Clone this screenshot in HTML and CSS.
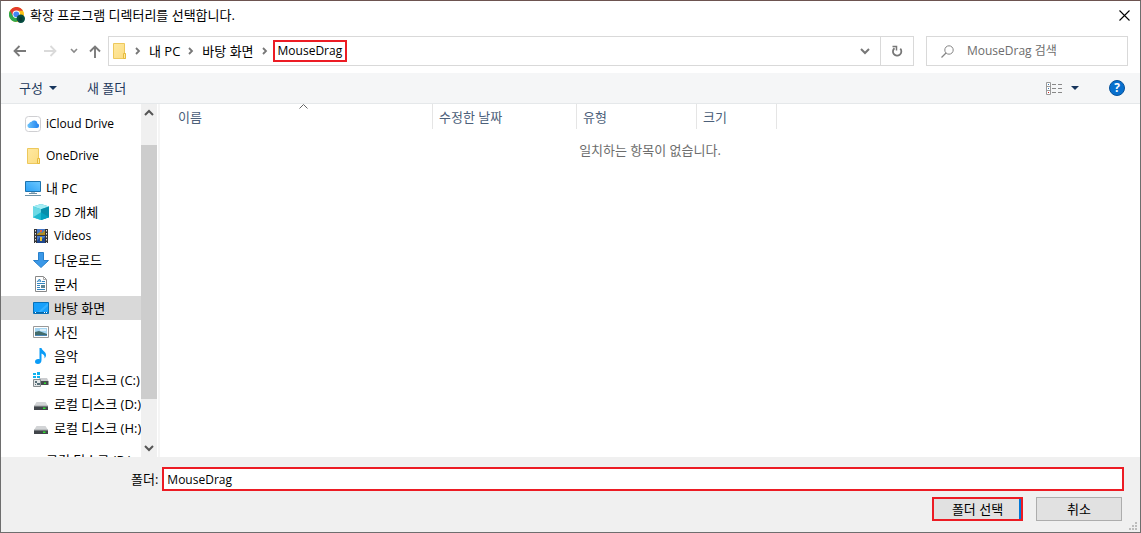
FILE: index.html
```
<!DOCTYPE html>
<html lang="ko">
<head>
    <meta charset="UTF-8">
    <meta name="viewport" content="width=device-width, initial-scale=1.0">
    <title>확장 프로그램 디렉터리를 선택합니다.</title>
    <link rel="stylesheet" href="styles.css">
</head>
<body>
  <svg class="defs" aria-hidden="true">
    <defs>
      <linearGradient id="screen" x1="0" y1="1" x2="1" y2="0">
        <stop offset="0" stop-color="#2ba0f5"/>
        <stop offset="1" stop-color="#6cc8ff"/>
      </linearGradient>
      <linearGradient id="paper" x1="0" y1="0" x2="1" y2="1">
        <stop offset="0" stop-color="#ffe9a0"/>
        <stop offset="1" stop-color="#fbdc82"/>
      </linearGradient>
      <linearGradient id="cloud" x1="0" y1="0" x2="1" y2="0">
        <stop offset="0" stop-color="#6cc4fb"/>
        <stop offset="1" stop-color="#2080ee"/>
      </linearGradient>
      <symbol id="folder" viewBox="0 0 16 16">
        <path d="M2.5 .5h11v9.5l1 1v4.500h-12z" fill="url(#paper)" stroke="#edc85c"/>
        <path d="M12.500 15.500v-5h2v5z" fill="#ffe9a0" stroke="#e6bb3e"/>
      </symbol>
      <symbol id="chevron" viewBox="0 0 6 8">
        <path d="M1 1l3 3-3 3" fill="none" stroke="#777" stroke-width="1.8"/>
      </symbol>
      <symbol id="drive" viewBox="0 0 16 16">
        <path d="M3.500 6h9l2.500 4H1z" fill="#d2d4d6"/>
        <path d="M1 10h14v4H1z" fill="#41454a"/>
        <path d="M1 9.500h14v1H1z" fill="#a5a8ab"/>
        <path d="M10 11.500h2.500v1.500H10z" fill="#2fe02f"/>
      </symbol>
    </defs>
  </svg>

  <div class="dialog">
    <header class="titlebar">
      <svg class="icon" viewBox="0 0 16 16">
        <circle cx="7.500" cy="7.500" r="7.500" fill="#fbc116"/>
        <path d="M7.500 7.500L1 3.700A7.500 7.500 0 0 0 7.500 15L10 9z" fill="#2da94f"/>
        <path d="M1 3.700A7.500 7.500 0 0 1 14 3.700H7.500L4 9z" fill="#e33b2e"/>
        <circle cx="7.300" cy="7.300" r="3.700" fill="#fff"/>
        <circle cx="7.300" cy="7.300" r="2.900" fill="#4486f4"/>
        <circle cx="11.800" cy="11.800" r="4.200" fill="#064c41"/>
        <path d="M10.500 9.500l1.500 1 1.300-.7v3l-1.300 1.700-2-1.500z" fill="#053b32"/>
      </svg>
      <h1>확장 프로그램 디렉터리를 선택합니다.</h1>
      <button class="close" type="button" aria-label="닫기">
        <svg width="11" height="11" viewBox="0 0 11 11"><path d="M.5 .5l10 10M10.500 .5l-10 10" stroke="#000" stroke-width="1.100"/></svg>
      </button>
    </header>

    <nav class="navbar">
      <button class="arrow" type="button" aria-label="뒤로">
        <svg width="14" height="12" viewBox="0 0 14 12"><path d="M13 6H2M6.500 1L1.500 6l5 5" fill="none" stroke="#7a7a7a" stroke-width="1.800"/></svg>
      </button>
      <button class="arrow next" type="button" aria-label="앞으로" disabled>
        <svg width="14" height="12" viewBox="0 0 14 12"><path d="M1 6h11M7.500 1l5 5-5 5" fill="none" stroke="#dadada" stroke-width="1.800"/></svg>
      </button>
      <button class="recent" type="button" aria-label="최근 위치">
        <svg width="8" height="6" viewBox="0 0 8 6"><path d="M1 1l3 3 3-3" fill="none" stroke="#8a8a8a" stroke-width="1.600"/></svg>
      </button>
      <button class="up" type="button" aria-label="위로">
        <svg width="12" height="13" viewBox="0 0 12 13"><path d="M6 13V2M1 6.500l5-5 5 5" fill="none" stroke="#7a7a7a" stroke-width="1.900"/></svg>
      </button>
      <div class="address">
        <svg class="icon"><use href="#folder"/></svg>
        <svg class="sep"><use href="#chevron"/></svg>
        <a href="#">내 PC</a>
        <svg class="sep"><use href="#chevron"/></svg>
        <a href="#">바탕 화면</a>
        <svg class="sep"><use href="#chevron"/></svg>
        <a class="current latin" href="#">MouseDrag</a>
        <button class="history" type="button" aria-label="이전 위치">
          <svg width="10" height="7" viewBox="0 0 10 7"><path d="M1 1l4 4 4-4" fill="none" stroke="#777" stroke-width="2"/></svg>
        </button>
        <button class="refresh" type="button" aria-label="새로 고침">
          <svg width="12" height="12" viewBox="0 0 12 12">
            <path d="M9.300 3.700A4.200 4.200 0 1 1 3.500 3.200" fill="none" stroke="#777" stroke-width="1.800"/>
            <path d="M1.500 1.500h4v4" fill="none" stroke="#777" stroke-width="1.500"/>
          </svg>
        </button>
      </div>
      <label class="search">
        <svg width="13" height="13" viewBox="0 0 13 13"><circle cx="8" cy="5" r="4.200" fill="none" stroke="#858585"/><path d="M5 8L.5 12.500" stroke="#858585" stroke-width="1.200"/></svg>
        <input type="text" placeholder="MouseDrag 검색" aria-label="MouseDrag 검색">
      </label>
    </nav>

    <div class="toolbar">
      <button type="button">구성 <span class="down"></span></button>
      <button class="new" type="button">새 폴더</button>
      <button class="view" type="button" aria-label="보기 변경">
        <svg width="17" height="13" viewBox="0 0 17 13">
          <path d="M.5 .5h4v12h-4zM.5 4.500h4M.5 8.500h4" fill="#fff" stroke="#9a9a9a"/>
          <path d="M2 2h1v1H2zM2 6h1v1H2z" fill="#3b78b5"/>
          <path d="M2 10h1v1H2z" fill="#d02020"/>
          <path d="M6 2.500h4M12 2.500h4M6 6.500h4M12 6.500h4M6 10.500h4M12 10.500h4" stroke="#888"/>
        </svg>
        <span class="down"></span>
      </button>
      <button class="help" type="button" aria-label="도움말">?</button>
    </div>

    <main class="main">
      <ul class="tree">
        <li class="top"><a href="#">
          <svg class="icon" viewBox="0 0 16 16"><rect x=".5" y=".5" width="15" height="15" rx="3" fill="#fff" stroke="#cfcfd2"/><path d="M4.300 12a2.300 2.300 0 0 1-.2-4.500A2.500 2.500 0 0 1 6.500 5.700 3.300 3.300 0 0 1 12.400 7.500 2.300 2.300 0 0 1 12 12z" fill="url(#cloud)"/></svg>
          <span class="latin">iCloud Drive</span></a></li>
        <li class="top"><a href="#">
          <svg class="icon"><use href="#folder"/></svg>
          <span class="latin">OneDrive</span></a></li>
        <li class="top"><a href="#">
          <svg class="icon" viewBox="0 0 16 16"><path d="M.5 1.500h15v10H.5z" fill="url(#screen)" stroke="#1d73ae"/><path d="M6 12h4v1.500H6z" fill="#a9bfcc"/><path d="M4 13h8v1H4zM0 15h16v1H0z" fill="#6f91a5"/></svg>
          내 PC</a></li>
        <li><a href="#">
          <svg class="icon" viewBox="0 0 16 16"><path d="M8 0l8 2.500v10.800L8 16 0 13.300V2.500z" fill="#22b8d0"/><path d="M8 0l8 2.500L8 5.300 0 2.500z" fill="#a5edf4"/><path d="M0 2.500l8 2.800V16l-8-2.700z" fill="#6bd9e5"/><path d="M8 5.300l8-2.800v10.800L8 16z" fill="#078fab"/><path d="M0 13.300l8-5V16z" fill="#1fb9cf"/><path d="M8 8.300l8 5L8 16z" fill="#05a3c0"/></svg>
          3D 개체</a></li>
        <li><a href="#">
          <svg class="icon" viewBox="0 0 16 16"><path d="M1 1h14v14H1z" fill="#343536"/><path d="M4 1h8v6H4zM4 8h8v7H4z" fill="#4779c9"/><path d="M4 6l3-2 2 1 3-3v5H4z" fill="#b18f23"/><path d="M7 2h2v2H7z" fill="#e95f3d"/><path d="M4 13l3-4 2 2 3-2v6H4z" fill="#1f478c"/><path d="M7 9h2v4H7z" fill="#e6c236"/><path d="M2.500 2v13M13.500 2v13" stroke="#e2e2e2" stroke-dasharray="1.500 1.500"/></svg>
          <span class="latin">Videos</span></a></li>
        <li><a href="#">
          <svg class="icon" viewBox="0 0 16 16"><path d="M5.500 .5h5v8h5L8 15.500 .5 8.500h5z" fill="#3a98e8" stroke="#2980cb"/></svg>
          다운로드</a></li>
        <li><a href="#">
          <svg class="icon" viewBox="0 0 16 16"><path d="M2.500 .5h8l3 3v12h-11z" fill="#fff" stroke="#888"/><path d="M10.500 .5v3h3" fill="none" stroke="#aaa"/><path d="M4 6l2.500-3L8 6M5 5h2.500M9 5.500h3M4 7.500h8M4 9.500h3M4 11.500h3M4 13.500h8" fill="none" stroke="#3385c0"/><path d="M8 9h4v3H8z" fill="#5d8595"/></svg>
          문서</a></li>
        <li><a class="selected" href="#">
          <svg class="icon" viewBox="0 0 16 16"><path d="M.5 2.500h15v11H.5z" fill="#18a0fb" stroke="#0871b9"/><path d="M15 3v3L8 12H5z" fill="#35b0ff"/><path d="M1 12h14v1H1z" fill="#0768a9"/><path d="M2 12h1v1H2zM11 12h1v1h-1zM13 12h1v1h-1z" fill="#fff"/></svg>
          바탕 화면</a></li>
        <li><a href="#">
          <svg class="icon" viewBox="0 0 16 16"><path d="M.5 2.500h15v11H.5z" fill="#fff" stroke="#999"/><path d="M2 4h12v8H2z" fill="#a5d5f2"/><path d="M2 8l4-1 8 3v2H2z" fill="#436c6c"/><path d="M2 11h12v1H2z" fill="#4a87b8"/><path d="M7 5h6v2H7z" fill="#dbeffa"/></svg>
          사진</a></li>
        <li><a href="#">
          <svg class="icon" viewBox="0 0 16 16"><path d="M6.500 0h2c.5 3 4.500 3.500 4.500 7 0 1.700-.8 2.700-1.500 3.500.5-3-.8-4.300-3-5V12c0 2.500-1.500 4-3.700 4C3.200 16 2 15 2 13.700c0-2 2.200-3.200 4.500-2.500z" fill="#0b9cf7"/></svg>
          음악</a></li>
        <li><a href="#">
          <svg class="icon" viewBox="0 0 16 16"><path d="M6 6h8l1.500 3H6z" fill="#cacccf"/><path d="M6 9h9.500v4H6z" fill="#45494d"/><path d="M11 10.500h2V12h-2z" fill="#2fe02f"/><path d="M0 1h3v2H0zM4 0h3v3H4zM0 4h3v2H0zM4 4h3v2H4z" fill="#0fb2ef"/><path d="M.5 7.500h7v7h-7z" fill="#e3e6e7" stroke="#858b8e"/><path d="M2 9h2v2H2zM4 11h3v2H4zM2 12h1v1H2z" fill="#586f78"/></svg>
          로컬 디스크 (C:)</a></li>
        <li><a href="#"><svg class="icon"><use href="#drive"/></svg>로컬 디스크 (D:)</a></li>
        <li><a href="#"><svg class="icon"><use href="#drive"/></svg>로컬 디스크 (H:)</a></li>
        <li class="top"><a href="#"><span class="icon"></span>로컬 디스크 (R:)</a></li>
      </ul>

      <div class="scrollbar">
        <svg width="10" height="7" viewBox="0 0 10 7"><path d="M1 6l4-4 4 4" fill="none" stroke="#555" stroke-width="2"/></svg>
        <div class="thumb"></div>
        <svg width="10" height="7" viewBox="0 0 10 7"><path d="M1 1l4 4 4-4" fill="none" stroke="#555" stroke-width="2"/></svg>
      </div>

      <div class="files">
        <table>
          <thead>
            <tr>
              <th class="name">이름
                <svg class="sort" width="9" height="5" viewBox="0 0 9 5"><path d="M.5 4.500l4-4 4 4" fill="none" stroke="#666"/></svg>
              </th>
              <th class="date">수정한 날짜</th>
              <th class="type">유형</th>
              <th class="size">크기</th>
              <td></td>
            </tr>
          </thead>
          <tbody>
            <tr><td class="empty" colspan="5">일치하는 항목이 없습니다.</td></tr>
          </tbody>
        </table>
      </div>
    </main>

    <footer class="footer">
      <div class="field">
        <label for="folder-name">폴더:</label>
        <input class="latin" id="folder-name" type="text" value="MouseDrag">
      </div>
      <div class="buttons">
        <button class="select" type="button">폴더 선택</button>
        <button class="cancel" type="button">취소</button>
      </div>
      <svg class="grip" width="8" height="8" viewBox="0 0 8 8"><path d="M6 0h2v2H6zM3 3h2v2H3zM6 3h2v2H6zM0 6h2v2H0zM3 6h2v2H3zM6 6h2v2H6z" fill="#bdbdbd"/></svg>
    </footer>
  </div>
</body>
</html>
```
FILE: styles.css
```
*{
  box-sizing: border-box;
  margin: 0;
  padding: 0;
}
body {
  font-family: "Open Sans", "Noto Sans CJK KR", sans-serif;
  font-size: 13px;
  line-height: 18px;
  color: #000;
}
button, input {
  font: inherit;
  color: inherit;
  border: none;
  background: none;
}
button {
  display: flex;
  align-items: center;
  justify-content: center;
}
a {
  color: inherit;
  text-decoration: none;
}
svg {
  display: block;
  flex-shrink: 0;
}
.defs {
  position: absolute;
  width: 0;
  height: 0;
}
.latin {
  font-size: 12px;
}
.icon {
  width: 16px;
  height: 16px;
  flex-shrink: 0;
}
.dialog {
  display: flex;
  flex-direction: column;
  height: 100vh;
  background-color: white;
  border: 1px solid #6e6e6e;
  border-top-color: #6d5350;
}

/* title */
.titlebar {
  display: flex;
  align-items: center;
  height: 28px;
  padding: 0 10px 0 8px;
}
.titlebar h1 {
  flex: 1;
  margin-left: 5px;
  font-size: 13px;
  font-weight: normal;
}

/* address row */
.navbar {
  display: flex;
  align-items: center;
  height: 44px;
  padding: 0 12px;
}
.arrow {
  width: 14px;
  height: 20px;
}
.next {
  margin-left: 16px;
}
.recent {
  width: 8px;
  margin-left: 13px;
}
.up {
  width: 12px;
  margin: 0 7px 0 11px;
}
.address {
  display: flex;
  align-items: center;
  flex: 1;
  height: 30px;
  padding-left: 2px;
  border: 1px solid #d9d9d9;
}
.address .sep {
  width: 6px;
  height: 8px;
  margin: 0 8px;
}
.address .current {
  margin-left: -3px;
  padding: 0 3px;
  border: 2px solid #ec1c24;
}
.history {
  width: 30px;
  height: 28px;
  margin-left: auto;
}
.refresh {
  width: 33px;
  height: 28px;
  border-left: 1px solid #d9d9d9;
}
.search {
  display: flex;
  align-items: center;
  width: 202px;
  height: 30px;
  margin-left: 12px;
  padding-left: 14px;
  border: 1px solid #d9d9d9;
}
.search input {
  flex: 1;
  min-width: 0;
  margin-left: 13px;
  font-size: 12px;
}
.search input::placeholder {
  color: #6d6d6d;
}

/* commands */
.toolbar {
  display: flex;
  align-items: center;
  height: 31px;
  padding: 0 15px 0 18px;
  color: #1e395b;
  background-color: #f5f6f7;
  border-bottom: 1px solid #e5e8ea;
}
.down {
  margin-left: 6px;
  border: 4px solid transparent;
  border-top-color: #17365d;
  border-bottom: none;
}
.new {
  margin-left: 30px;
}
.view {
  margin-left: auto;
}
.view .down {
  margin-left: 8px;
}
.help {
  width: 16px;
  height: 16px;
  margin-left: 30px;
  font-size: 12px;
  font-weight: bold;
  color: white;
  background-color: #0870ce;
  border: 1px solid #07529b;
  border-radius: 50%;
}

/* folders */
.main {
  display: flex;
  flex: 1;
  min-height: 0;
}
.tree {
  width: 140px;
  padding-top: 8px;
  overflow: hidden;
  list-style: none;
  white-space: nowrap;
}
.tree a {
  display: flex;
  align-items: center;
  gap: 5px;
  height: 24px;
  padding-left: 32px;
}
.tree .top a {
  padding-left: 24px;
}
.tree .top:nth-child(-n+2), .tree li:nth-child(13) {
  margin-bottom: 8px;
}
.tree .selected {
  background-color: #d9d9d9;
}
.scrollbar {
  display: flex;
  flex-direction: column;
  align-items: center;
  width: 16px;
  padding: 5px 0;
  background-color: #f0f0f0;
}
.thumb {
  width: 16px;
  height: 254px;
  margin: 29px 0 auto;
  background-color: #cdcdcd;
}
.files {
  flex: 1;
  margin-left: 1px;
  border-left: 2px solid #f5f5f5;
}
table {
  width: 100%;
  table-layout: fixed;
  border-collapse: separate;
  border-spacing: 0;
}
th {
  position: relative;
  height: 25px;
  padding-left: 6px;
  font-weight: normal;
  text-align: left;
  color: #4c607a;
  border-right: 1px solid #e5e5e5;
}
.name {
  width: 273px;
  padding-left: 18px;
}
.date {
  width: 144px;
}
.type {
  width: 120px;
}
.size {
  width: 80px;
}
.sort {
  position: absolute;
  top: 0;
  left: 51%;
}
.empty {
  padding-top: 12px;
  text-align: center;
  color: #6d6d6d;
}

/* folder name and buttons */
.footer {
  position: relative;
  height: 75px;
  padding: 10px 16px 0 130px;
  background-color: #f0f0f0;
}
.field {
  display: flex;
  align-items: center;
  gap: 4px;
}
.field input {
  flex: 1;
  height: 24px;
  padding-left: 3px;
  background-color: white;
  border: 2px solid #ec1c24;
}
.buttons {
  display: flex;
  justify-content: flex-end;
  gap: 13px;
  margin-top: 6px;
  padding-right: 2px;
}
.buttons button {
  width: 86px;
  height: 24px;
  background-color: #e1e1e1;
  border: 1px solid #adadad;
}
.buttons .select {
  width: 91px;
  border: 2px solid #ec1c24;
  box-shadow: inset -2px 0 #0078d7;
}
.grip {
  position: absolute;
  right: 3px;
  bottom: 2px;
}
```
